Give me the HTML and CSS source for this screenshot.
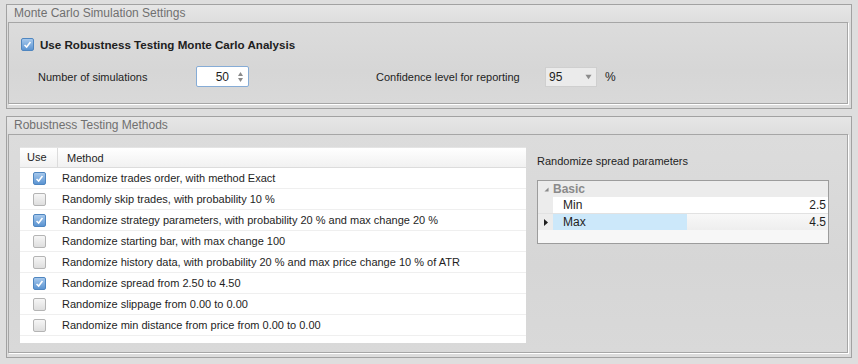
FILE: index.html
```html
<!DOCTYPE html>
<html>
<head>
    <title>Monte Carlo Simulation Settings</title>
    <link rel="stylesheet" href="styles.css">
</head>
<body>
    <div class="page">
        <div class="group group-settings">
            <div class="group-title">Monte Carlo Simulation Settings</div>
            <div class="group-body settings-body">
                <div class="main-check">
                    <span class="check checked"><svg viewBox="0 0 13 13"><path d="M3 7 L5.5 9.5 L10 3.5" /></svg></span>
                    <span class="main-label">Use Robustness Testing Monte Carlo Analysis</span>
                </div>
                <div class="settings-row">
                    <span class="field-label sims-label">Number of simulations</span>
                    <div class="spinner">
                        <span class="spinner-value">50</span>
                        <span class="spinner-arrows"><svg viewBox="0 0 7 12"><path d="M3.5 1 L6 5 L1 5 Z M3.5 11 L6 7 L1 7 Z" /></svg></span>
                    </div>
                    <span class="field-label conf-label">Confidence level for reporting</span>
                    <div class="dropdown">
                        <span>95</span>
                        <svg viewBox="0 0 8 6"><path d="M0.5 0.5 L7.5 0.5 L4 5.5 Z" /></svg>
                    </div>
                    <span class="percent">%</span>
                </div>
            </div>
        </div>

        <div class="group group-methods">
            <div class="group-title">Robustness Testing Methods</div>
            <div class="group-body methods-body">
                <div class="methods-table">
                    <div class="table-head">
                        <div class="col-use">Use</div>
                        <div class="col-method">Method</div>
                    </div>
                    <div class="table-row">
                        <div class="col-use"><span class="check checked"><svg viewBox="0 0 13 13"><path d="M3 7 L5.5 9.5 L10 3.5" /></svg></span></div>
                        <div class="col-method">Randomize trades order, with method Exact</div>
                    </div>
                    <div class="table-row">
                        <div class="col-use"><span class="check"></span></div>
                        <div class="col-method">Randomly skip trades, with probability 10 %</div>
                    </div>
                    <div class="table-row">
                        <div class="col-use"><span class="check checked"><svg viewBox="0 0 13 13"><path d="M3 7 L5.5 9.5 L10 3.5" /></svg></span></div>
                        <div class="col-method">Randomize strategy parameters, with probability 20 % and max change 20 %</div>
                    </div>
                    <div class="table-row">
                        <div class="col-use"><span class="check"></span></div>
                        <div class="col-method">Randomize starting bar, with max change 100</div>
                    </div>
                    <div class="table-row">
                        <div class="col-use"><span class="check"></span></div>
                        <div class="col-method">Randomize history data, with probability 20 % and max price change 10 % of ATR</div>
                    </div>
                    <div class="table-row">
                        <div class="col-use"><span class="check checked"><svg viewBox="0 0 13 13"><path d="M3 7 L5.5 9.5 L10 3.5" /></svg></span></div>
                        <div class="col-method">Randomize spread from 2.50 to 4.50</div>
                    </div>
                    <div class="table-row">
                        <div class="col-use"><span class="check"></span></div>
                        <div class="col-method">Randomize slippage from 0.00 to 0.00</div>
                    </div>
                    <div class="table-row">
                        <div class="col-use"><span class="check"></span></div>
                        <div class="col-method">Randomize min distance from price from 0.00 to 0.00</div>
                    </div>
                </div>

                <div class="params-panel">
                    <div class="params-title">Randomize spread parameters</div>
                    <div class="prop-grid">
                        <div class="prop-category">
                            <span class="prop-margin"><svg viewBox="0 0 6 6"><path d="M5.5 0.5 L5.5 5.5 L0.5 5.5 Z" /></svg></span>
                            <span class="category-name">Basic</span>
                        </div>
                        <div class="prop-row">
                            <span class="prop-margin"></span>
                            <span class="prop-name">Min</span>
                            <span class="prop-value">2.5</span>
                        </div>
                        <div class="prop-row selected">
                            <span class="prop-margin"><svg viewBox="0 0 4 7"><path d="M0 0 L4 3.5 L0 7 Z" /></svg></span>
                            <span class="prop-name">Max</span>
                            <span class="prop-value">4.5</span>
                        </div>
                    </div>
                </div>
            </div>
        </div>
    </div>
</body>
</html>
```

FILE: styles.css
```css
body {
    margin: 0;
    background: #dedede;
    font-family: "Liberation Sans", Arial, sans-serif;
    font-size: 11px;
    color: #1e1e1e;
}
.page {
    padding: 4px 6px 0 6px;
    width: 846px;
}
.group {
    border: 1px solid #a2a2a2;
    background: #dcdcdc;
}
.group-methods {
    margin-top: 7px;
}
.group-title {
    height: 17px;
    line-height: 17px;
    padding-left: 7px;
    font-size: 12px;
    color: #707070;
    background: linear-gradient(#e6e6e6, #dedede);
}
.group-body {
    margin: 0 3px 4px 1px;
    border: 1px solid #a6a6a6;
    box-shadow: 1px 1px 0 #ffffff;
    background: linear-gradient(#dcdcdc, #d6d6d6 60%, #d9d9d9);
}
.settings-body {
    height: 82px;
    box-sizing: border-box;
    padding: 14px 0 0 12px;
}
.main-check {
    display: flex;
    align-items: center;
    height: 15px;
}
.main-label {
    margin-left: 6px;
    font-weight: bold;
    font-size: 11.6px;
    color: #202020;
}
.check {
    display: inline-block;
    width: 13px;
    height: 13px;
    box-sizing: border-box;
    border: 1px solid #b4b4b4;
    border-radius: 2px;
    background: linear-gradient(#f6f6f6, #dedede);
}
.check svg {
    display: block;
    width: 11px;
    height: 11px;
}
.check path {
    fill: none;
    stroke: #ffffff;
    stroke-width: 1.8;
}
.check.checked {
    border-color: #4f86c0;
    background: linear-gradient(#a6c8ec, #5b94d2);
}
.settings-row {
    display: flex;
    align-items: center;
    margin: 14px 0 0 17px;
    height: 21px;
}
.sims-label {
    width: 158px;
}
.conf-label {
    width: 169px;
    margin-left: 127px;
}
.spinner {
    display: flex;
    align-items: center;
    justify-content: flex-end;
    width: 53px;
    height: 21px;
    box-sizing: border-box;
    border: 1px solid #86acd6;
    border-radius: 2px;
    background: #ffffff;
    padding-right: 4px;
    font-size: 12px;
}
.spinner-value {
    margin-right: 8px;
}
.spinner-arrows svg {
    display: block;
    width: 7px;
    height: 12px;
    fill: #8a8a8a;
}
.dropdown {
    display: flex;
    align-items: center;
    justify-content: space-between;
    width: 52px;
    height: 20px;
    box-sizing: border-box;
    padding: 0 4px 0 3px;
    border: 1px solid #cfcfcf;
    background: #ebebeb;
    font-size: 12px;
    color: #1e1e1e;
}
.dropdown svg {
    width: 7px;
    height: 6px;
    fill: #8c8c8c;
}
.percent {
    margin-left: 8px;
    font-size: 12px;
}
.methods-body {
    display: flex;
    align-items: flex-start;
    height: 219px;
    box-sizing: border-box;
    padding: 12px 0 0 11px;
}
.methods-table {
    width: 506px;
    height: 196px;
    background: #ffffff;
    border-top: 1px solid #e4e4e4;
    box-sizing: border-box;
}
.table-head {
    display: flex;
    height: 20px;
    box-sizing: border-box;
    align-items: center;
    background: linear-gradient(#ffffff, #f1f1f1);
    border-bottom: 1px solid #dcdcdc;
}
.table-head .col-use {
    height: 19px;
    line-height: 19px;
    border-right: 1px solid #dcdcdc;
    padding-left: 7px;
    justify-content: flex-start;
}
.table-head .col-method {
    padding-left: 9px;
}
.col-use {
    width: 38px;
    box-sizing: border-box;
    display: flex;
    align-items: center;
    justify-content: center;
}
.col-method {
    padding-left: 4px;
    white-space: nowrap;
}
.table-row {
    display: flex;
    align-items: center;
    height: 21px;
    box-sizing: border-box;
    border-bottom: 1px solid #efefef;
}
.table-row .check {
    margin-left: 1px;
}
.params-panel {
    margin-left: 11px;
    width: 292px;
}
.params-title {
    height: 33px;
    box-sizing: border-box;
    padding-top: 8px;
    font-size: 11px;
}
.prop-grid {
    height: 64px;
    box-sizing: border-box;
    border: 1px solid #9c9c9c;
    background: #f7f7f7;
}
.prop-margin {
    width: 15px;
    display: flex;
    align-items: center;
    justify-content: center;
    flex: none;
}
.prop-category {
    display: flex;
    align-items: center;
    height: 16px;
    background: #ececec;
}
.prop-category svg {
    width: 5px;
    height: 5px;
    fill: #8a8a8a;
    margin-left: 2px;
}
.category-name {
    font-weight: bold;
    color: #8a8a8a;
    font-size: 12px;
}
.prop-row {
    display: flex;
    align-items: center;
    height: 16px;
    background: #ececec;
}
.prop-row .prop-name {
    width: 134px;
    padding-left: 10px;
    box-sizing: border-box;
    background: #ffffff;
    height: 16px;
    line-height: 16px;
    font-size: 12px;
}
.prop-row .prop-value {
    flex: 1;
    text-align: right;
    padding-right: 2px;
    background: #ffffff;
    height: 16px;
    line-height: 16px;
    font-size: 12px;
}
.prop-row.selected {
    border-top: 1px solid #e2e2e2;
}
.prop-row.selected .prop-name {
    background: #cce8fa;
}
.prop-row.selected .prop-value {
    background: linear-gradient(#f8f8f8, #eeeeee);
}
.prop-row svg {
    width: 4px;
    height: 7px;
    fill: #1e1e1e;
}
```
